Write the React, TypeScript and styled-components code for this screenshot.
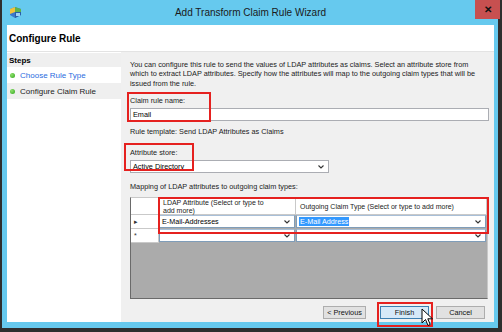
import * as React from "react";
import styled, { createGlobalStyle } from "styled-components";

const GlobalStyle = createGlobalStyle`
  html, body {
    margin: 0;
    padding: 0;
    background: #2e2e2e;
  }
  body {
    font-family: "Liberation Sans", Arial, sans-serif;
    color: #1b1b1b;
  }
`;

const Window = styled.div`
  width: 502px;
  height: 332px;
  box-sizing: border-box;
  background: #2e2e2e;
  padding: 0 4px 4px 2px;
  display: flex;
`;

const Frame = styled.div`
  flex: 1;
  background: #66c9ee;
  display: flex;
  flex-direction: column;
  padding: 0 4px 6px 5px;
`;

const TitleBar = styled.div`
  height: 25px;
  display: grid;
  grid-template-columns: 1fr auto 1fr;
  align-items: start;
`;

const TitleIcon = styled.div`
  padding: 5px 0 0 2px;
`;

const TitleText = styled.div`
  font-size: 10px;
  line-height: 25px;
  color: #1a1a1a;
`;

const CloseButton = styled.div`
  justify-self: end;
  margin-right: -6px;
  width: 25px;
  height: 19px;
  background: #c75050;
  color: #111;
  font-size: 10px;
  font-weight: bold;
  display: flex;
  align-items: center;
  justify-content: center;
`;

const Client = styled.div`
  flex: 1;
  background: #fff;
  display: flex;
  flex-direction: column;
`;

const Header = styled.div`
  height: 26px;
  border-bottom: 1px solid #e3e3e3;
  font-size: 10px;
  font-weight: bold;
  color: #000;
  padding-left: 2px;
  display: flex;
  align-items: center;
`;

const Body = styled.div`
  flex: 1;
  display: flex;
`;

const StepsPanel = styled.div`
  width: 114px;
  background: #fff;
  display: flex;
  flex-direction: column;
  padding-top: 1px;
`;

const StepsHeading = styled.div`
  height: 14px;
  background: #efefef;
  font-size: 8px;
  font-weight: bold;
  color: #000;
  padding-left: 2px;
  display: flex;
  align-items: center;
`;

const StepRow = styled.div<{ $current?: boolean; $link?: boolean }>`
  height: 16px;
  background: ${(p) => (p.$current ? "#efefef" : "#fff")};
  color: ${(p) => (p.$link ? "#2a6ce0" : "#1b1b1b")};
  font-size: 8px;
  display: flex;
  align-items: center;
  gap: 5px;
  padding-left: 3px;
`;

const Dot = styled.span`
  width: 5px;
  height: 5px;
  border-radius: 50%;
  background: radial-gradient(circle at 35% 35%, #8ee06a, #2fa51e);
`;

const Main = styled.div`
  flex: 1;
  background: #f0f0f0;
  padding: 8px 5px 0 9px;
  display: flex;
  flex-direction: column;
  font-size: 7.3px;
`;

const Intro = styled.div`
  line-height: 9.4px;
  white-space: nowrap;
`;

const FieldGroup = styled.div<{ $gap: number }>`
  position: relative;
  display: flex;
  flex-direction: column;
  gap: 2px;
  margin-top: ${(p) => p.$gap}px;
`;

const Label = styled.div`
  line-height: 10px;
  white-space: nowrap;
`;

const TextBox = styled.div<{ $width?: number }>`
  height: 13px;
  box-sizing: border-box;
  width: ${(p) => (p.$width ? `${p.$width}px` : "100%")};
  background: #fff;
  border: 1px solid #abadb3;
  display: flex;
  align-items: center;
  justify-content: space-between;
  padding: 0 4px 0 2px;
  color: #000;
`;

const Chevron = styled.svg`
  width: 6px;
  height: 4px;
  flex: none;
`;

const Annotation = styled.div<{ $l: number; $t: number; $w: number; $h: number }>`
  position: absolute;
  left: ${(p) => p.$l}px;
  top: ${(p) => p.$t}px;
  width: ${(p) => p.$w}px;
  height: ${(p) => p.$h}px;
  border: 2px solid #e5211f;
  box-sizing: border-box;
  pointer-events: none;
`;

const Plain = styled.div<{ $gap: number }>`
  margin-top: ${(p) => p.$gap}px;
  line-height: 10px;
`;

const Grid = styled.div`
  position: relative;
  margin-top: 5px;
  margin-right: 1px;
  height: 102px;
  background: #ababab;
  border: 1px solid #6a6a6a;
  border-top-color: #c8c8c8;
  border-right-color: #c8c8c8;
  box-sizing: border-box;
  display: grid;
  grid-template-columns: 28px 137px 1fr;
  grid-template-rows: 17px 14px 14px;
`;

const HeadCell = styled.div<{ $corner?: boolean }>`
  background: #fff;
  border-right: 1px solid #c9c9c9;
  border-bottom: 1px solid #c9c9c9;
  line-height: 7.5px;
  padding: 1px 22px 0 4px;
  font-size: 7px;
  color: #1b1b1b;
  display: flex;
  align-items: ${(p) => (p.$corner ? "stretch" : "center")};
`;

const RowHead = styled.div`
  background: #fff;
  border-right: 1px solid #c9c9c9;
  border-bottom: 1px solid #c9c9c9;
  font-size: 7px;
  display: flex;
  align-items: center;
  padding-left: 3px;
  color: #333;
`;

const ComboCell = styled.div`
  background: #fff;
  border: 1px solid #7f9db9;
  border-top-color: #a8bfd8;
  margin: 0 1px 1px 0;
  display: flex;
  align-items: center;
  justify-content: space-between;
  padding: 0 4px 0 2px;
  font-size: 7.2px;
  color: #000;
`;

const Selected = styled.span`
  background: #3399ff;
  color: #fff;
  padding: 0 1px;
  line-height: 9px;
`;

const Footer = styled.div`
  display: flex;
  justify-content: flex-end;
  gap: 7px;
  padding: 7px 4px 0 0;
`;

const Button = styled.div<{ $focus?: boolean; $width: number; $after?: number }>`
  position: relative;
  width: ${(p) => p.$width}px;
  margin-right: ${(p) => p.$after ?? 0}px;
  height: 13px;
  box-sizing: border-box;
  background: ${(p) => (p.$focus ? "#d6e9f8" : "#e1e1e1")};
  border: 1px solid ${(p) => (p.$focus ? "#3c7fb1" : "#adadad")};
  font-size: 7.3px;
  display: flex;
  align-items: center;
  justify-content: center;
  color: #111;
`;

const Cursor = styled.svg`
  position: absolute;
  left: 40px;
  top: 1px;
  width: 13px;
  height: 19px;
`;

function DownArrow() {
  return (
    <Chevron viewBox="0 0 6 4">
      <path d="M0.5 0.5 L3 3 L5.5 0.5" fill="none" stroke="#333" strokeWidth="1.1" />
    </Chevron>
  );
}

function WizardIcon() {
  return (
    <svg width="13" height="13" viewBox="0 0 13 13">
      <path d="M1 3 L6 1 L12 3 L12 9 L6 12 L1 9 Z" fill="#3c78c8" />
      <path d="M1 3 L6 1 L6 6 L1 8 Z" fill="#f2c23a" />
      <path d="M6 1 L12 3 L12 6 L6 6 Z" fill="#5fb34a" />
      <path d="M6 6 L12 6 L12 9 L6 12 Z" fill="#2a5fa8" />
      <rect x="7" y="7" width="4" height="3" fill="#9fd3f2" />
    </svg>
  );
}

export default function App() {
  return (
    <>
      <GlobalStyle />
      <Window>
        <Frame>
          <TitleBar>
            <TitleIcon>
              <WizardIcon />
            </TitleIcon>
            <TitleText>Add Transform Claim Rule Wizard</TitleText>
            <CloseButton>✕</CloseButton>
          </TitleBar>
          <Client>
            <Header>Configure Rule</Header>
            <Body>
              <StepsPanel>
                <StepsHeading>Steps</StepsHeading>
                <StepRow $link>
                  <Dot />
                  Choose Rule Type
                </StepRow>
                <StepRow $current>
                  <Dot />
                  Configure Claim Rule
                </StepRow>
              </StepsPanel>
              <Main>
                <Intro>
                  You can configure this rule to send the values of LDAP attributes as claims. Select an attribute store from
                  <br />
                  which to extract LDAP attributes. Specify how the attributes will map to the outgoing claim types that will be
                  <br />
                  issued from the rule.
                </Intro>
                <FieldGroup $gap={8}>
                  <Label>Claim rule name:</Label>
                  <TextBox>Email</TextBox>
                  <Annotation $l={-3} $t={-4} $w={84} $h={30} />
                </FieldGroup>
                <Plain $gap={6}>Rule template: Send LDAP Attributes as Claims</Plain>
                <FieldGroup $gap={11}>
                  <Label>Attribute store:</Label>
                  <TextBox $width={199}>
                    Active Directory
                    <DownArrow />
                  </TextBox>
                  <Annotation $l={-6} $t={-5} $w={70} $h={28} />
                </FieldGroup>
                <Plain $gap={9}>Mapping of LDAP attributes to outgoing claim types:</Plain>
                <Grid>
                  <HeadCell $corner />
                  <HeadCell>LDAP Attribute (Select or type to add more)</HeadCell>
                  <HeadCell>Outgoing Claim Type (Select or type to add more)</HeadCell>
                  <RowHead>▸</RowHead>
                  <ComboCell>
                    E-Mail-Addresses
                    <DownArrow />
                  </ComboCell>
                  <ComboCell>
                    <Selected>E-Mail Address</Selected>
                    <DownArrow />
                  </ComboCell>
                  <RowHead>*</RowHead>
                  <ComboCell>
                    <span />
                    <DownArrow />
                  </ComboCell>
                  <ComboCell>
                    <span />
                    <DownArrow />
                  </ComboCell>
                  <Annotation $l={27} $t={-1} $w={331} $h={37} />
                </Grid>
                <Footer>
                  <Button $width={43} $after={7}>&lt; Previous</Button>
                  <Button $focus $width={49}>
                    Finish
                    <Annotation $l={-4} $t={-5} $w={56} $h={25} />
                    <Cursor viewBox="0 0 13 19">
                      <path
                        d="M1 1 L1 15 L4.5 11.5 L7 17.5 L9.2 16.5 L6.8 10.8 L11.5 10.8 Z"
                        fill="#fff"
                        stroke="#000"
                        strokeWidth="1"
                        strokeLinejoin="round"
                      />
                    </Cursor>
                  </Button>
                  <Button $width={49}>Cancel</Button>
                </Footer>
              </Main>
            </Body>
          </Client>
        </Frame>
      </Window>
    </>
  );
}
